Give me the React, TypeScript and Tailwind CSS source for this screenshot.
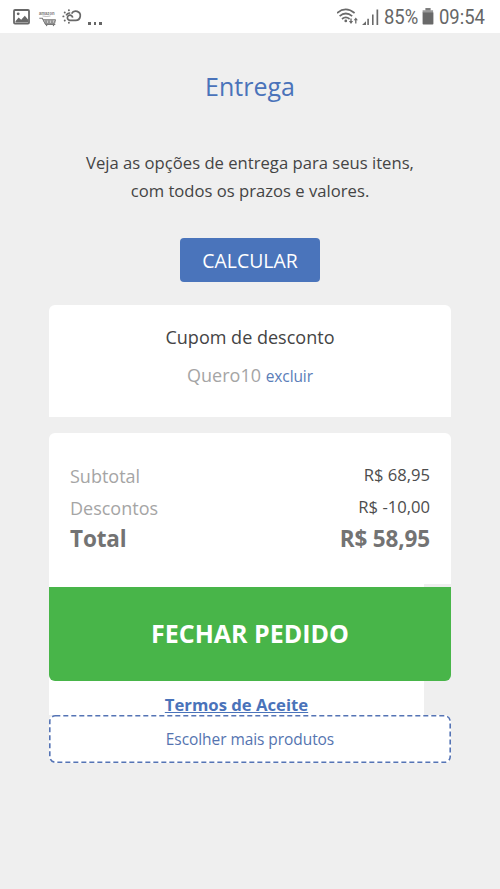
import type { ReactNode } from 'react'

interface SummaryRowProps {
  label: string
  value: string
}

function PictureIcon() {
  return (
    <svg className="ml-[13px] mt-[9px] h-4 w-[17px] shrink-0" viewBox="0 0 17 16" fill="none">
      <rect x="1" y="1" width="15" height="13.6" rx="1" stroke="#686868" strokeWidth="1.8" />
      <path d="M2.5 12.2 5.6 8.5 8.2 10.8 11.8 6.8 15 10.5v3H2.5Z" fill="#686868" />
      <circle cx="5.2" cy="4.8" r="1.4" fill="#686868" />
    </svg>
  )
}

function ShoppingIcon() {
  return (
    <svg className="ml-[9px] mt-[10px] h-[17px] w-[18px] shrink-0 overflow-visible" viewBox="0 0 18 17" fill="none" stroke="#777">
      <text x="0" y="5" fontSize="5.2" fontWeight="700" fontFamily="Liberation Sans, sans-serif" fill="#777" stroke="none" textLength="15.5" lengthAdjust="spacingAndGlyphs">amazon</text>
      <path d="M3.5 6q4 1 8 0" strokeWidth=".5" />
      <path d="M.3 8.3h3l3.4 6.2h9.6" strokeWidth="1.1" />
      <path d="M4.2 9.6h12.3l-.8 4H6Z" fill="#c8c8c8" strokeWidth=".8" />
      <path d="m6 10 2 3.6M9 10l2 3.6M12 10l2 3.6M8 10l-1.6 3.2M11 10l-2 3.6M14 10l-2 3.6M16.4 10l-1.8 3.6" strokeWidth=".7" />
      <circle cx="7.6" cy="15.5" r=".7" fill="#777" stroke="none" />
      <circle cx="14.5" cy="15.5" r=".7" fill="#777" stroke="none" />
    </svg>
  )
}

function WeatherIcon() {
  return (
    <svg className="ml-[5px] mt-[9px] h-4 w-5 shrink-0" viewBox="0 0 20 16" fill="none" stroke="#686868" strokeWidth="1.7">
      <path d="M10.6 8.6A2.6 2.6 0 1 0 8.2 11.3H13.6A4.6 4.6 0 1 0 9.6 4.6" />
      <path d="M8.2 4A4 4 0 0 0 4.2 6.4" />
      <path d="M1.3 7.4h.2M2.7 3.4l.1.1M6.9 1.1v.1M2.7 11.6l.1-.1M6.9 13.7v.1" strokeWidth="1.9" strokeLinecap="round" />
    </svg>
  )
}

function WifiIcon() {
  return (
    <svg className="mt-2 h-[18px] w-[22px] shrink-0" viewBox="0 0 22 18" fill="none" stroke="#6a6a6a" strokeWidth="1.7">
      <path d="M0 5Q8.7-2.4 17.6 5" />
      <path d="M2.6 8.2Q8.7 2.8 15.2 8.2" />
      <path d="M5 11Q8.7 7.8 12.6 11" />
      <circle cx="8.8" cy="12.9" r="1.4" fill="#6a6a6a" stroke="none" />
      <path d="M14 10.5v3.8M18.8 11.4v4" strokeWidth="1.3" />
      <path d="M11.9 13h4.2L14 16ZM16.7 12.3h4.2l-2.1-2.8Z" fill="#6a6a6a" stroke="none" />
    </svg>
  )
}

function SignalIcon() {
  return (
    <svg className="ml-[3px] mt-[9px] h-4 w-[18px] shrink-0" viewBox="0 0 18 16" fill="#6a6a6a">
      <path d="M0 16 4 12.2V16ZM5.3 9.7h1.6V16H5.3ZM10 5.4h1.6V16H10ZM14.5.6h1.7V16h-1.7Z" />
    </svg>
  )
}

function BatteryIcon() {
  return (
    <svg className="mt-2 h-[17px] w-3 shrink-0" viewBox="0 0 12 17" fill="#696969">
      <path d="M3.5.3h5v1.9h2.6V5H.6V2.2h2.9Z" fill="#999" />
      <path d="M.6 4.5h10.8v11.3q0 .8-.8.8H1.4q-.8 0-.8-.8Z" />
      <path d="M3.5.3h5v1.3h-5Z" />
    </svg>
  )
}

function StatusText({ children }: { children: ReactNode }) {
  return (
    <span className="block origin-left scale-x-[.9] font-['Roboto'] text-[20.5px] leading-[34px] text-[#666]">
      {children}
    </span>
  )
}

function StatusBar() {
  return (
    <header className="flex h-[33px] items-start bg-white">
      <PictureIcon />
      <ShoppingIcon />
      <WeatherIcon />
      <div className="ml-[6px] mt-[22px] flex gap-[3px]">
        <i className="size-[2.5px] bg-[#666]" />
        <i className="size-[2.5px] bg-[#666]" />
        <i className="size-[2.5px] bg-[#666]" />
      </div>
      <div className="ml-auto flex w-[163px] items-start">
        <WifiIcon />
        <SignalIcon />
        <div className="ml-1 w-[38px]"><StatusText>85%</StatusText></div>
        <BatteryIcon />
        <div className="ml-[5px] w-12"><StatusText>09:54</StatusText></div>
      </div>
    </header>
  )
}

function SummaryRow({ label, value }: SummaryRowProps) {
  return (
    <div className="flex h-8 justify-between">
      <dt className="text-[18px] leading-8 text-[#a5a5a5]">{label}</dt>
      <dd className="text-[16.6px] leading-[30px] text-[#4d4d4d]">{value}</dd>
    </div>
  )
}

export default function App() {
  return (
    <div className="min-h-[889px] w-[500px] bg-[#efefef] font-['Open_Sans',sans-serif] text-[#444]">
      <StatusBar />

      <main className="mx-[49px] flex flex-col text-center">
        {/* Delivery */}
        <section className="flex flex-col items-center">
          <h1 className="mt-9 text-[25px] leading-[34px] text-[#4a73ba]">Entrega</h1>
          <p className="mt-[46px] text-[16.65px] leading-[28px]">
            Veja as opções de entrega para seus itens,
            <br />
            com todos os prazos e valores.
          </p>
          <button className="mt-[33px] h-11 w-[140px] rounded bg-[#4a74bb] text-[19.4px] leading-[45px] text-white">CALCULAR</button>
        </section>

        {/* Coupon */}
        <section className="mt-[23px] h-28 rounded-t-md bg-white pt-[17px]">
          <h2 className="text-[18.05px] leading-[30px]">Cupom de desconto</h2>
          <p className="mt-2 text-[18px] leading-[30px] text-[#a5a5a5]">
            Quero10
            {' '}
            <a className="text-[15.5px] tracking-[-0.1px] text-[#5a7db8]">excluir</a>
          </p>
        </section>

        {/* Order summary */}
        <section className="mt-4 h-[151px] rounded-t-md bg-white px-[21px] pt-[27px]">
          <dl>
            <SummaryRow label="Subtotal" value="R$ 68,95" />
            <SummaryRow label="Descontos" value="R$ -10,00" />
            <div className="flex justify-between text-[22.5px] font-bold leading-[30px] tracking-[-0.14px] text-[#737373]">
              <dt>Total</dt>
              <dd>R$ 58,95</dd>
            </div>
          </dl>
        </section>

        {/* The white strip is narrower than the button it holds */}
        <section className="h-[131px] w-[375px] bg-white pt-[3px]">
          <button className="block h-[94px] w-[402px] rounded-b-md bg-[#48b549] pb-0.5 text-[25px] font-bold leading-[92px] text-white">FECHAR PEDIDO</button>
          <a className="block pt-[11px] text-[16.7px] font-bold leading-[25px] text-[#4a73ba] underline">Termos de Aceite</a>
        </section>

        <a className="relative h-12 rounded-md bg-white text-[15.5px] leading-[49px] tracking-[-0.07px] text-[#5574b0]">
          <svg className="absolute inset-0 size-full" viewBox="0 0 402 48" fill="none">
            <rect x=".8" y=".8" width="400.4" height="46.4" rx="5.5" stroke="#5574b5" strokeWidth="1.6" strokeDasharray="5 3" />
          </svg>
          Escolher mais produtos
        </a>
      </main>
    </div>
  )
}
